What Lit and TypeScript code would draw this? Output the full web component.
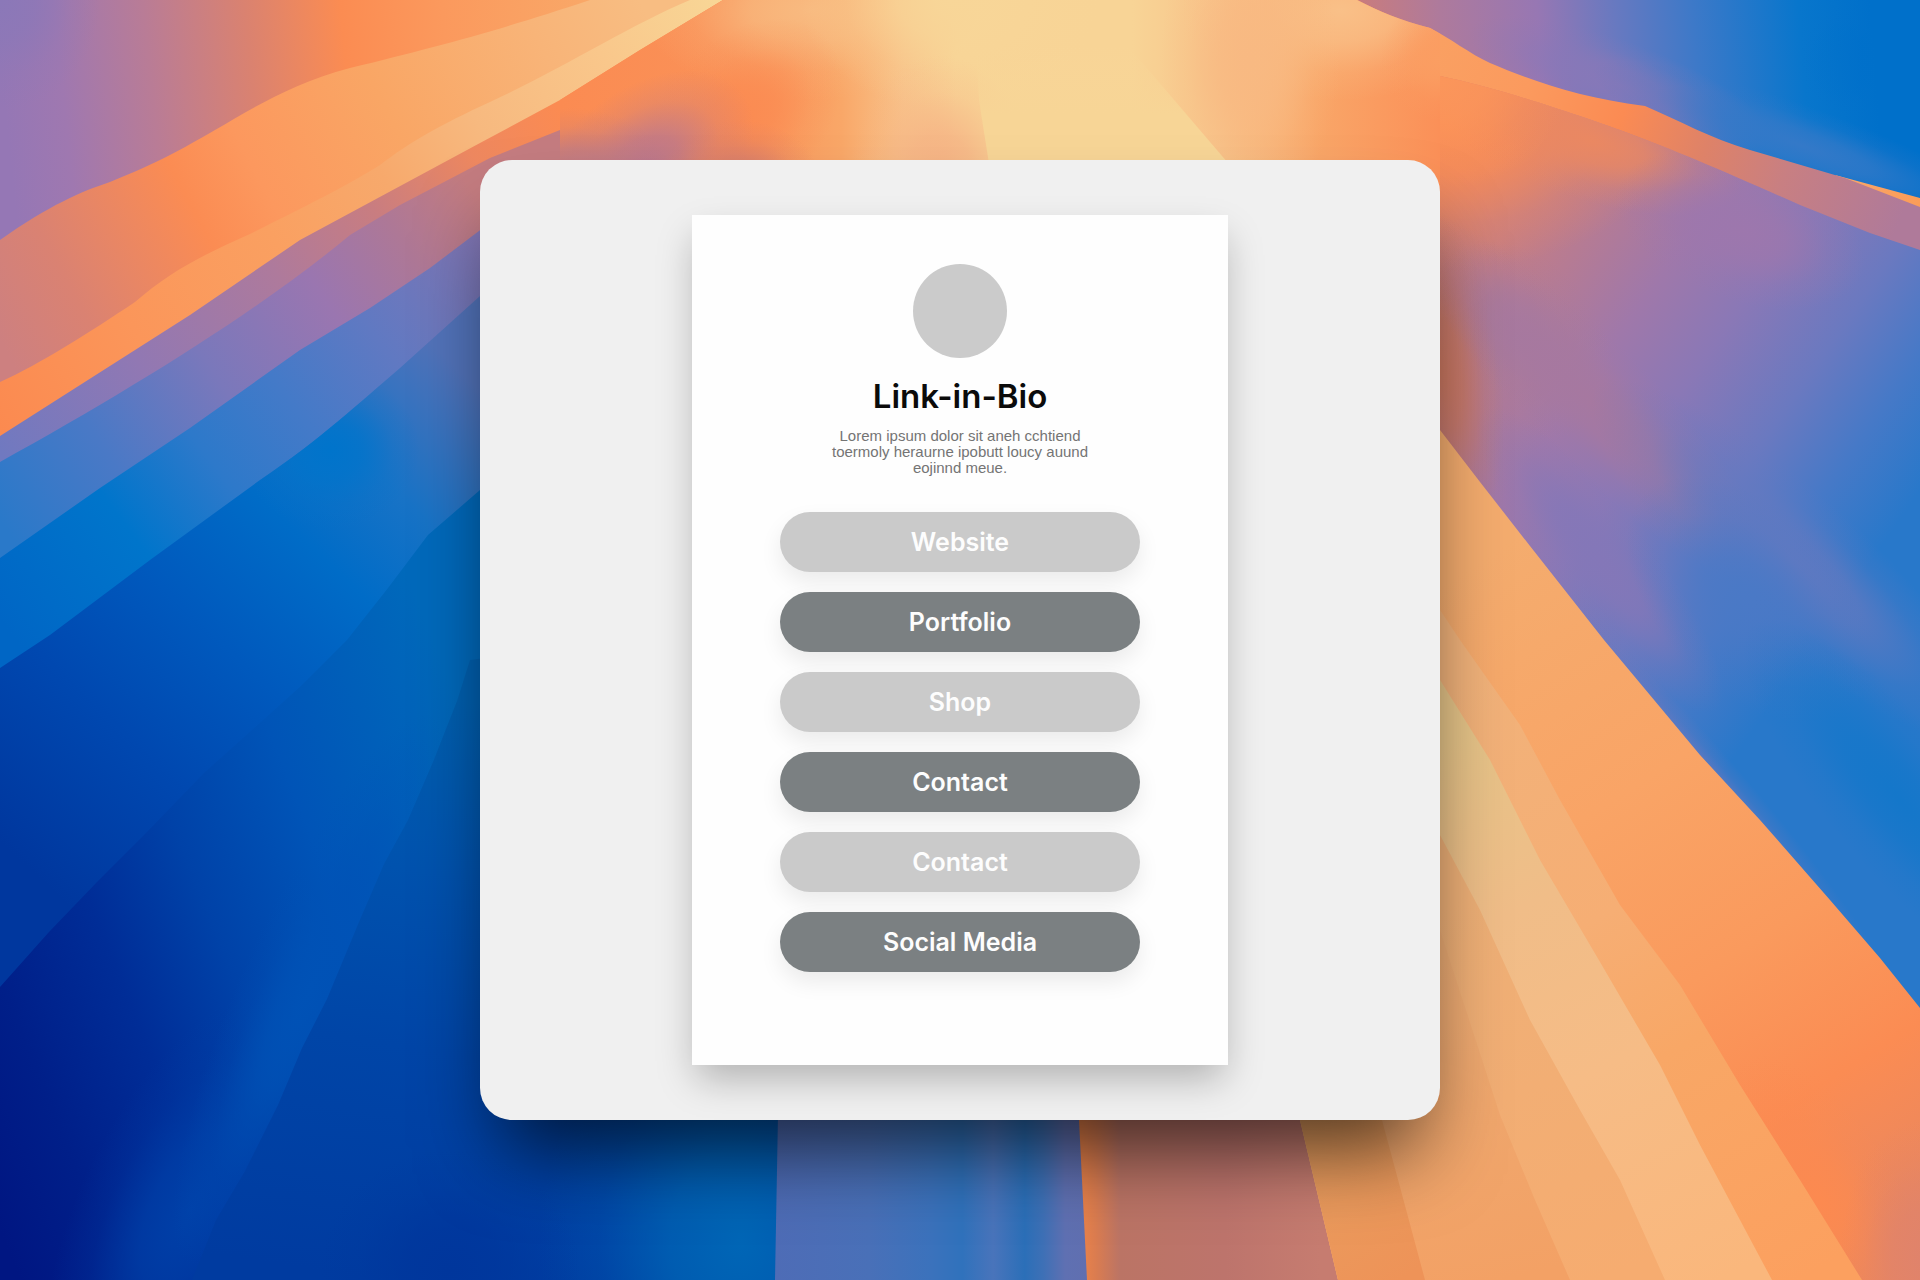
import { LitElement, html, css, svg } from "lit";
import { customElement } from "lit/decorators.js";

type Spot = [x: number, y: number, rx: number, ry: number, color: string, angle?: number];

interface Ray {
  d: string;
  axis: [number, number, number, number];
  stops: [number, string][];
  spots?: Spot[];
}

// Back to front: each ray covers everything beneath its upper edge.
const RAYS: Ray[] = [
  {
    d: "M0 0H800V300H0Z",
    axis: [0, 60, 590, 0],
    stops: [[0, "#9577b5"], [0.1, "#9f78b0"], [0.25, "#b97c96"], [0.42, "#da8270"], [0.58, "#fb8c52"], [0.75, "#fb995d"], [1, "#f9a868"]],
    spots: [[0, 0, 100, 110, "#8b78b8"]],
  },
  {
    d: "M0 240C50 205 80 192 110 182C160 162 180 150 215 130C250 110 290 84 350 68C440 46 500 30 590 0H900V500H0Z",
    axis: [0, 340, 640, 0],
    stops: [[0, "#cd8080"], [0.12, "#da8272"], [0.32, "#fb8c53"], [0.42, "#fc985e"], [0.62, "#f9a665"], [0.85, "#f8b478"], [1, "#f8bd82"]],
  },
  {
    d: "M0 382C40 364 90 332 135 302C170 272 200 256 250 234C310 204 350 184 380 165C410 142 440 125 490 102C560 70 630 25 690 0H900V600H0Z",
    axis: [0, 430, 715, 0],
    stops: [[0, "#fb8a50"], [0.2, "#fb965a"], [0.4, "#faa061"], [0.55, "#f7a96c"], [0.68, "#f7b97f"], [0.85, "#f9c78b"], [1, "#f8d696"]],
  },
  {
    d: "M0 436L190 315L300 240L480 143L560 100L640 50L723 0H1500V700H0Z",
    axis: [0, 450, 560, 110],
    stops: [[0, "#7079c0"], [0.25, "#9178b3"], [0.5, "#ae7a9c"], [0.68, "#c97d80"], [0.85, "#ee8860"], [1, "#fb8b52"]],
  },
  {
    d: "M0 462C130 390 260 310 350 235L400 205L490 158L560 130L700 180V900H0Z",
    axis: [0, 520, 480, 200],
    stops: [[0, "#2a79c9"], [0.22, "#4a79c6"], [0.45, "#7a78bb"], [0.68, "#9a76b0"], [0.85, "#ae7896"], [1, "#c47c80"]],
  },
  {
    d: "M0 558L100 488L190 428L300 350L370 308L430 268L520 200V900H0Z",
    axis: [0, 620, 500, 240],
    stops: [[0, "#0066c5"], [0.25, "#0075cb"], [0.42, "#2d79ca"], [0.58, "#447ac8"], [0.75, "#6079c2"], [1, "#8576b3"]],
  },
  {
    d: "M0 668L50 635L150 560L260 480C320 440 360 402 400 368L520 260V1280H0Z",
    axis: [20, 860, 470, 380],
    stops: [[0, "#00379e"], [0.25, "#0048b0"], [0.45, "#0059bd"], [0.65, "#006cc7"], [0.8, "#1873c6"], [1, "#5273ba"]],
    spots: [[330, 450, 90, 80, "#0074cb"]],
  },
  {
    d: "M0 987L49 932L98 881L147 832L204 773L261 722L302 685L347 640L388 588L428 535L480 490H900V1280H0Z",
    axis: [0, 1230, 577, 1000],
    stops: [[0, "#001682"], [0.15, "#001f89"], [0.33, "#002d97"], [0.5, "#0042a8"], [0.7, "#0054b7"], [1, "#0069bb"]],
    spots: [[190, 1210, 110, 240, "#0040a8", 26], [310, 990, 70, 300, "#0052b6", 24]],
  },
  {
    d: "M470 660L457 701L433 762L408 820L384 864L359 922L327 999L302 1048L278 1105L245 1171L216 1220L192 1280H900V600Z",
    axis: [470, 700, 380, 1280],
    stops: [[0, "#0060b0"], [0.3, "#0052ae"], [0.6, "#0045a7"], [1, "#003ba0"]],
    spots: [[740, 1240, 200, 260, "#0066b6"], [450, 1270, 130, 120, "#00369c"]],
  },
  {
    d: "M779 1060L775 1280H1300V1060Z",
    axis: [775, 0, 1087, 0],
    stops: [[0, "#4e6cb6"], [0.3, "#4970b8"], [0.5, "#3b72bc"], [0.6, "#3072bc"], [0.7, "#4974bb"], [0.8, "#2b6fb8"], [0.86, "#3e70b6"], [0.93, "#5f70b2"], [1, "#606fb0"]],
  },
  {
    d: "M1076 1060L1087 1280H1500V1060Z",
    axis: [1082, 0, 1320, 0],
    stops: [[0, "#ea824a"], [0.06, "#da7c50"], [0.16, "#bb7465"], [0.6, "#bd746c"], [1, "#c67c70"]],
  },
  {
    d: "M1285 1060L1300 1120L1338 1280H1920V1000Z",
    axis: [1300, 1280, 1540, 1060],
    stops: [[0, "#ee975a"], [1, "#f5a668"]],
  },
  // Right half, above the panel's shoulder
  {
    d: "M1320 0H1920V260H1320Z",
    axis: [1360, 40, 1870, 0],
    stops: [[0, "#ca7c7c"], [0.16, "#ae7a9c"], [0.35, "#9777b3"], [0.5, "#6879c0"], [0.65, "#3e79c8"], [0.86, "#0876cc"], [1, "#0070ca"]],
    spots: [[1620, 85, 160, 44, "#8878b8", 20], [1800, 145, 220, 40, "#3479c8", 20], [1900, 60, 100, 70, "#0070ca"]],
  },
  {
    d: "M1835 175L1920 198V230Z",
    axis: [1835, 175, 1920, 198],
    stops: [[0, "#f9a86c"], [1, "#fb9c58"]],
  },
  {
    d: "M1357 0C1380 12 1410 25 1430 28C1450 38 1470 54 1490 63C1530 80 1580 98 1645 106C1680 121 1710 138 1750 150L1845 178L1920 207V300H1300V0Z",
    axis: [1440, 40, 1900, 220],
    stops: [[0, "#faa062"], [0.2, "#fb9a5e"], [0.4, "#fb8b53"], [0.58, "#de8268"], [0.75, "#c87f82"], [1, "#af7a9a"]],
  },
  {
    d: "M1440 76C1500 88 1580 116 1620 130C1680 152 1730 174 1800 205L1870 233L1920 250V1060H1440Z",
    axis: [1440, 200, 1900, 520],
    stops: [[0, "#da8270"], [0.2, "#bd7c8c"], [0.4, "#9f78aa"], [0.55, "#8a78b6"], [0.72, "#6a79c0"], [0.86, "#4679c7"], [1, "#2878ca"]],
    spots: [
      [1450, 120, 230, 150, "#fb8d54"],
      [1590, 140, 160, 60, "#ea8862", 18],
      [1440, 80, 130, 110, "#fb965b"],
      [1740, 230, 130, 70, "#9d77ad", 20],
      [1520, 340, 110, 80, "#a87a9c", 50],
      [1440, 370, 60, 170, "#cc7860", -8],
      [1590, 400, 260, 60, "#a678a0", 45],
      [1790, 560, 260, 70, "#6479c0", 42],
      [1600, 560, 190, 50, "#8477b8", 52],
      [1750, 600, 150, 90, "#4a79c6", 45],
      [1900, 800, 230, 70, "#1477ca", 50],
      [1700, 780, 300, 36, "#7078bd", 49],
    ],
  },
  // Warm rays to the lower right
  {
    d: "M1440 430L1480 482L1530 546L1604 640L1700 755L1760 820L1830 900L1880 958L1920 1008V1280H1440Z",
    axis: [1480, 560, 1900, 1220],
    stops: [[0, "#f4ac6e"], [0.35, "#f9a466"], [0.6, "#fa9a5d"], [0.8, "#fb8c53"], [1, "#e8865f"]],
    spots: [[1820, 1200, 80, 160, "#fc8a50", -30], [1920, 1260, 80, 140, "#e0836b"]],
  },
  {
    d: "M1440 610L1460 640L1520 725L1560 800L1620 905L1680 985L1740 1085L1800 1180L1862 1280H1440Z",
    axis: [1460, 680, 1800, 1280],
    stops: [[0, "#f1b27a"], [0.4, "#f6ae74"], [0.62, "#f8a766"], [1, "#fca05f"]],
  },
  {
    d: "M1440 680L1490 760L1540 860L1600 962L1660 1065L1700 1145L1740 1220L1772 1280H1440Z",
    axis: [1450, 740, 1720, 1280],
    stops: [[0, "#e6c488"], [0.3, "#f0bd88"], [0.6, "#f6bc86"], [1, "#fab77c"]],
  },
  {
    d: "M1440 835L1480 910L1530 1020L1580 1110L1620 1180L1665 1280H1338L1300 1120H1440Z",
    axis: [1450, 900, 1600, 1280],
    stops: [[0, "#eeb077"], [0.5, "#f2ae74"], [1, "#f6ac70"]],
  },
  {
    d: "M1440 930L1500 1115L1535 1200L1570 1280H1422L1375 1100H1440Z",
    axis: [1430, 960, 1500, 1280],
    stops: [[0, "#edac74"], [1, "#f3a165"]],
  },
  {
    d: "M1285 1060L1300 1120L1338 1280H1425L1382 1120V1060Z",
    axis: [1300, 1120, 1400, 1280],
    stops: [[0, "#e8a060"], [1, "#ee9358"]],
  },
];

// The glow behind the panel's top edge.
const CROWN: Ray = {
  d: "M723 0L640 50L560 100V200H1440V34L1430 28C1400 20 1380 12 1357 0Z",
  axis: [560, 0, 1440, 0],
  stops: [[0, "#fb8b52"], [0.2, "#fa9258"], [0.32, "#f9a768"], [0.39, "#f8c38a"], [0.45, "#f8d496"], [0.65, "#f8d496"], [0.75, "#f8c48a"], [0.86, "#f9a668"], [1, "#fb9058"]],
  spots: [
    [810, 10, 170, 90, "#f8ba80"],
    [950, 0, 150, 110, "#f8d698"],
    [1340, 10, 160, 90, "#f9c088"],
    [1250, 60, 90, 150, "#f8b982"],
    [740, 120, 120, 80, "#fb8b52", -45],
    [640, 172, 130, 80, "#b87690", -38],
    [570, 172, 100, 64, "#bd7a86"],
    [740, 180, 80, 60, "#d67e6e"],
    [940, 175, 90, 120, "#f6b284"],
    [1440, 60, 60, 60, "#fb9e62"],
  ],
};

const paint = (ray: Ray, id: string) => svg`
  <defs>
    <linearGradient id=${id} gradientUnits="userSpaceOnUse"
      x1=${ray.axis[0]} y1=${ray.axis[1]} x2=${ray.axis[2]} y2=${ray.axis[3]}>
      ${ray.stops.map(([at, color]) => svg`<stop offset=${at} stop-color=${color}></stop>`)}
    </linearGradient>
    <clipPath id=${id + "-clip"}><path d=${ray.d}></path></clipPath>
    ${(ray.spots ?? []).map((s, i) => svg`
      <radialGradient id=${`${id}-s${i}`}>
        <stop offset="0" stop-color=${s[4]}></stop>
        <stop offset="0.35" stop-color=${s[4]} stop-opacity="0.75"></stop>
        <stop offset="0.7" stop-color=${s[4]} stop-opacity="0.22"></stop>
        <stop offset="1" stop-color=${s[4]} stop-opacity="0"></stop>
      </radialGradient>`)}
  </defs>
  <path d=${ray.d} fill=${`url(#${id})`}></path>
  <g clip-path=${`url(#${id}-clip)`}>
    ${(ray.spots ?? []).map(([x, y, rx, ry, , angle = 0], i) => svg`
      <ellipse cx=${x} cy=${y} rx=${rx} ry=${ry}
        transform=${`rotate(${angle} ${x} ${y})`} fill=${`url(#${id}-s${i})`}></ellipse>`)}
  </g>`;

@customElement("sunburst-wallpaper")
export class SunburstWallpaper extends LitElement {
  static styles = css`
    :host {
      display: block;
    }
    .art {
      display: block;
      width: 100%;
      height: 100%;
    }
  `;

  render() {
    return html`
      <svg class="art" viewBox="0 0 1920 1280" preserveAspectRatio="xMidYMid slice" aria-hidden="true">
        ${RAYS.map((ray, i) => paint(ray, `ray${i}`))}
        ${paint(CROWN, "crown")}
        <defs>
          <linearGradient id="beam" x1="0" y1="0" x2="0" y2="1">
            <stop offset="0.1" stop-color="#f8d698" stop-opacity="0"></stop>
            <stop offset="0.6" stop-color="#f7d596"></stop>
          </linearGradient>
        </defs>
        <path d="M975 30L979 100L990 170H1234L1140 60L1110 30Z" fill="url(#beam)"></path>
      </svg>
    `;
  }
}

interface BioLink {
  label: string;
  href: string;
}

@customElement("app-root")
export class AppRoot extends LitElement {
  static styles = css`
    :host {
      display: block;
      font-family: Inter, "Liberation Sans", sans-serif;
    }
    .stage {
      position: relative;
      display: grid;
      place-items: center;
      min-height: 100vh;
      overflow: hidden;
    }
    .wallpaper {
      position: absolute;
      inset: 0;
    }
    .panel {
      position: relative;
      box-sizing: border-box;
      display: flex;
      justify-content: center;
      align-items: flex-start;
      width: 50%;
      min-width: min(100%, 640px);
      padding: 55px 24px;
      border-radius: 32px;
      background: #f0f0f0;
      box-shadow: 0 50px 80px -20px rgba(0, 0, 0, 0.65);
    }
    .card {
      box-sizing: border-box;
      width: 100%;
      max-width: 536px;
      padding: 49px 88px 93px;
      display: flex;
      flex-direction: column;
      align-items: center;
      background: #fefefe;
      box-shadow: 0 18px 36px -4px rgba(0, 0, 0, 0.26);
    }
    .avatar {
      width: 94px;
      height: 94px;
      border-radius: 50%;
      background: #cbcbcb;
    }
    .title {
      margin: 18px 0 0;
      font-size: 33px;
      line-height: 40px;
      font-weight: 600;
      color: #0b0b0b;
    }
    .bio {
      margin: 12px 0 0;
      font-family: "Liberation Sans", Arial, sans-serif;
      font-size: 15px;
      line-height: 16px;
      text-align: center;
      white-space: pre-line;
      color: #747474;
    }
    .links {
      align-self: stretch;
      display: flex;
      flex-direction: column;
      gap: 20px;
      margin: 36px 0 0;
      padding: 0;
      list-style: none;
    }
    .link {
      display: block;
      border-radius: 30px;
      background: #cacaca;
      box-shadow: 0 10px 22px rgba(0, 0, 0, 0.08);
      color: #fdfdfd;
      font-size: 25px;
      font-weight: 600;
      line-height: 60px;
      text-align: center;
      text-decoration: none;
    }
    .item:nth-child(even) .link {
      background: #7b8082;
    }
  `;

  private readonly bio =
    "Lorem ipsum dolor sit aneh cchtiend\ntoermoly heraurne ipobutt loucy auund\neojinnd meue.";

  private readonly links: BioLink[] = [
    { label: "Website", href: "#website" },
    { label: "Portfolio", href: "#portfolio" },
    { label: "Shop", href: "#shop" },
    { label: "Contact", href: "#contact" },
    { label: "Contact", href: "#contact" },
    { label: "Social Media", href: "#social-media" },
  ];

  render() {
    return html`
      <main class="stage">
        <sunburst-wallpaper class="wallpaper"></sunburst-wallpaper>
        <section class="panel">
          <article class="card">
            <div class="avatar"></div>
            <h1 class="title">Link-in-Bio</h1>
            <p class="bio">${this.bio}</p>
            <ul class="links">
              ${this.links.map(
                (link) => html`<li class="item"><a class="link" href=${link.href}>${link.label}</a></li>`
              )}
            </ul>
          </article>
        </section>
      </main>
    `;
  }
}
